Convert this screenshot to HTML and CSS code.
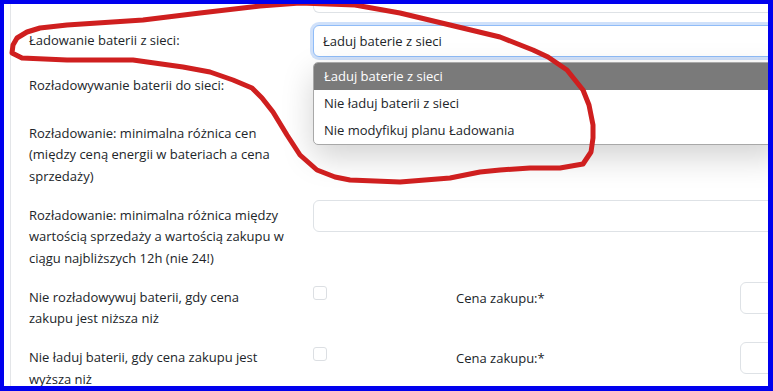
FILE: index.html
```html
<!DOCTYPE html>
<html lang="pl">
<head>
<meta charset="utf-8">
<title>Ustawienia baterii</title>
<link rel="stylesheet" href="styles.css">
</head>
<body>
<div class="frame">
  <div class="page">
    <div class="stub"></div>

    <div class="row">
      <label class="lbl">Ładowanie baterii z sieci:</label>
      <div class="ctl">
        <div class="select focus">Ładuj baterie z sieci</div>
        <ul class="dropdown">
          <li class="opt active">Ładuj baterie z sieci</li>
          <li class="opt">Nie ładuj baterii z sieci</li>
          <li class="opt">Nie modyfikuj planu Ładowania</li>
        </ul>
      </div>
    </div>

    <div class="row row-wide">
      <label class="lbl">Rozładowywanie baterii do sieci:</label>
      <div class="ctl"><div class="input"></div></div>
    </div>

    <div class="row">
      <label class="lbl">Rozładowanie: minimalna różnica cen (między ceną energii w bateriach a cena sprzedaży)</label>
      <div class="ctl"><div class="input short"></div></div>
    </div>

    <div class="row">
      <label class="lbl">Rozładowanie: minimalna różnica między wartością sprzedaży a wartością zakupu w ciągu najbliższych 12h (nie 24!)</label>
      <div class="ctl"><div class="input"></div></div>
    </div>

    <div class="row">
      <label class="lbl">Nie rozładowywuj baterii, gdy cena<br>zakupu jest niższa niż</label>
      <div class="ctl split">
        <div class="chk-col"><span class="checkbox"></span></div>
        <div class="sub-lbl">Cena zakupu:*</div>
        <div class="input small"></div>
      </div>
    </div>

    <div class="row">
      <label class="lbl">Nie ładuj baterii, gdy cena zakupu jest wyższa niż</label>
      <div class="ctl split">
        <div class="chk-col"><span class="checkbox second"></span></div>
        <div class="sub-lbl">Cena zakupu:*</div>
        <div class="input small"></div>
      </div>
    </div>
  </div>

  <svg class="annot" width="773" height="391" viewBox="0 0 773 391">
    <polyline fill="none" stroke="#cf1f1f" stroke-width="5" stroke-linecap="round" stroke-linejoin="round"
      points="593,125 589,105 583,90 567,70 548,57 533,50 500,37 450,25 400,13 355,5 300,3 260,6 200,13 143,20 67,25 40,28 27,32 17,38 13,45 12,53 22,58 67,60 133,60 183,67 210,72 233,80 252,88 262,98 273,112 287,135 300,155 317,170 335,177 350,180 400,182 450,178 480,172 500,170 530,168 560,168 583,164 591,152 593,138 593,125"/>
  </svg>
</div>
</body>
</html>
```

FILE: styles.css
```css
* { box-sizing: border-box; }

html, body {
  margin: 0;
  padding: 0;
  background: #ffffff;
}

.frame {
  position: relative;
  width: 773px;
  height: 391px;
  overflow: hidden;
  border: 4px solid #0000ee;
  border-right-width: 5px;
  border-bottom-width: 5px;
  background: #ffffff;
  font-family: "Open Sans", "Noto Sans", sans-serif;
  font-size: 13px;
  line-height: 21.5px;
  color: #212529;
}

.page {
  margin-left: 6px;
  width: 1000px;
  min-height: 400px;
  border-left: 1px solid #e3e5e8;
  padding-left: 18px;
}

.stub {
  margin-left: 284px;
  width: 520px;
  height: 9px;
  border: 1px solid #dee2e6;
  border-top: none;
  border-radius: 0 0 6px 6px;
  margin-bottom: 12px;
}

.row {
  display: flex;
  align-items: flex-start;
  margin-bottom: 12.5px;
}

.row-wide { margin-bottom: 16px; }

.lbl {
  flex: 0 0 284px;
  padding-top: 5px;
  padding-right: 22px;
}

.ctl {
  position: relative;
  flex: 0 0 520px;
}

.select, .input {
  height: 32px;
  border: 1px solid #dee2e6;
  border-radius: 6px;
  background: #ffffff;
}

.select {
  padding-left: 9px;
  line-height: 30px;
}

.select.focus {
  border-color: #8fbcf8;
  box-shadow: 0 0 0 3px rgba(120, 170, 240, 0.35);
}

.input.short { height: 26px; }

.dropdown {
  position: absolute;
  top: 37px;
  left: 0;
  width: 470px;
  margin: 0;
  padding: 0;
  list-style: none;
  background: #ffffff;
  border: 1px solid #a8a8a8;
  border-radius: 5px;
  overflow: hidden;
  box-shadow: 0 12px 32px rgba(0, 0, 0, 0.18);
  z-index: 5;
}

.opt {
  height: 27px;
  line-height: 27px;
  padding-left: 10px;
  white-space: nowrap;
}

.opt.active {
  background: #7a7a7a;
  color: #ffffff;
}

.split {
  display: flex;
  align-items: flex-start;
}

.chk-col {
  flex: 0 0 143px;
  padding-top: 4px;
}

.checkbox {
  display: block;
  width: 14px;
  height: 14px;
  border: 1px solid #dcdfe3;
  border-radius: 3px;
}

.checkbox.second { margin-top: 1px; }

.sub-lbl {
  flex: 0 0 284px;
  padding-top: 6px;
}

.input.small {
  flex: 0 0 90px;
}

.annot {
  position: absolute;
  left: -4px;
  top: -4px;
  z-index: 10;
  pointer-events: none;
}
```
